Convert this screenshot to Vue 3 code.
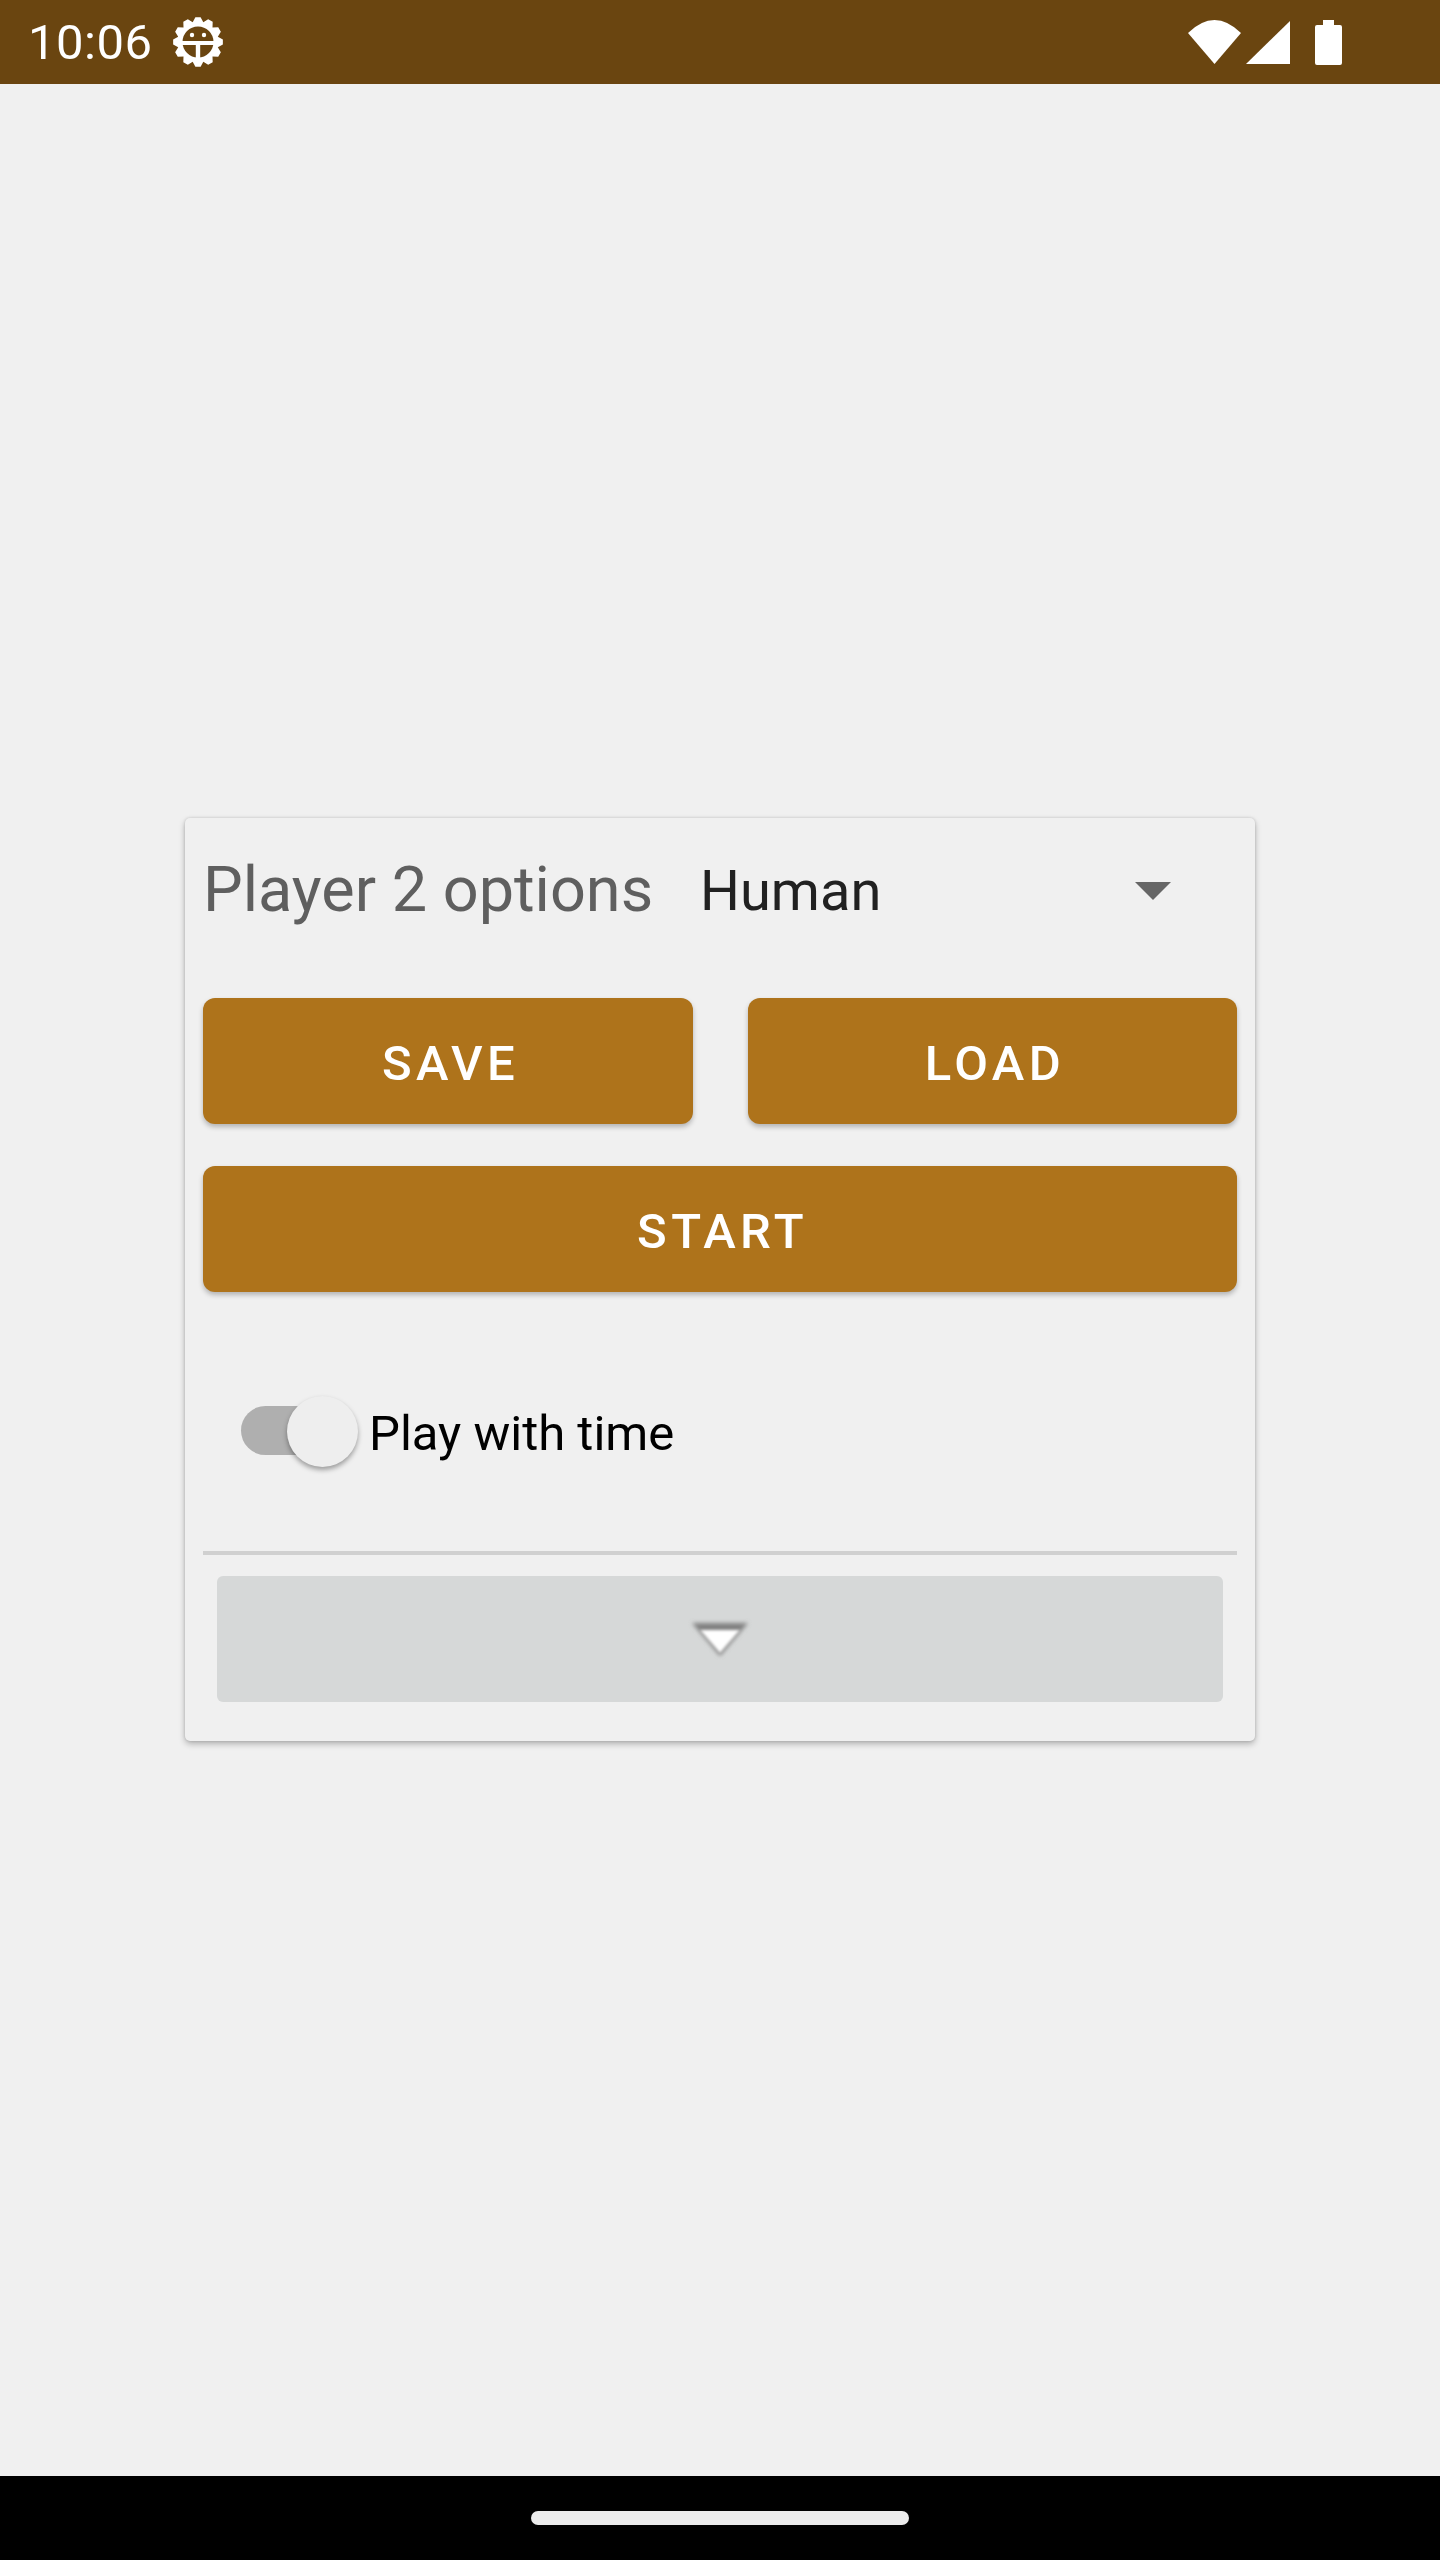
<template>
  <div class="pantalla">
    <div class="status-bar">
      <span class="hora">10:06</span>
      <svg class="icono-debug" viewBox="0 0 50 50">
        <polygon fill="#fff" :points="puntosEngranaje" />
        <circle cx="25" cy="25" r="15.500" fill="#6a4510" />
        <circle cx="19" cy="18" r="2.200" fill="#fff" />
        <circle cx="31" cy="18" r="2.200" fill="#fff" />
        <path d="M8 24h34v4H27.200v14h-4.400V28H8z" fill="#fff" />
      </svg>
      <div class="iconos-estado">
        <svg class="icono-wifi" viewBox="0 0 53 44"><path d="M0 13Q26.500-13 53 13L26.500 44z" fill="#fff" /></svg>
        <svg class="icono-senal" viewBox="0 0 44 43"><path d="M44 0V43H0z" fill="#fff" /></svg>
        <svg class="icono-bateria" viewBox="0 0 27 45"><path d="M8 0h11v5h6a2 2 0 0 1 2 2v36a2 2 0 0 1-2 2H2a2 2 0 0 1-2-2V7a2 2 0 0 1 2-2h6z" fill="#fff" /></svg>
      </div>
    </div>

    <main class="contenido">
      <div class="tarjeta">
        <div class="fila-jugador">
          <span class="titulo">Player 2 options</span>
          <div class="selector">
            <span>Human</span>
            <i class="flecha"></i>
          </div>
        </div>

        <div class="fila-botones">
          <button class="boton">SAVE</button>
          <button class="boton">LOAD</button>
        </div>
        <button class="boton boton-start">START</button>

        <div class="fila-tiempo">
          <div class="switch">
            <div class="switch-pista"></div>
            <div class="switch-bola"></div>
          </div>
          <span class="etiqueta">Play with time</span>
        </div>

        <div class="separador"></div>

        <div class="desplegar">
          <svg class="flecha-desplegar" viewBox="0 0 70 46">
            <defs>
              <filter id="difuso" x="-20%" y="-20%" width="140%" height="140%">
                <feGaussianBlur stdDeviation="2.200" />
              </filter>
              <filter id="difuso-suave" x="-20%" y="-20%" width="140%" height="140%">
                <feGaussianBlur stdDeviation="1.500" />
              </filter>
            </defs>
            <path d="M7 7H63L35 40z" fill="#808080" filter="url(#difuso)" />
            <path d="M15 14H55L35 37z" fill="#fff" filter="url(#difuso-suave)" />
          </svg>
        </div>
      </div>
    </main>

    <div class="nav-bar">
      <div class="pastilla"></div>
    </div>
  </div>
</template>

<script setup>
import { computed } from "vue";

// Dientes del engranaje del icono de depuración
const puntosEngranaje = computed(() => {
  const puntos = [];
  const dientes = 12;
  for (let i = 0; i < dientes; i++) {
    const base = (i / dientes) * Math.PI * 2;
    const paso = (Math.PI * 2) / dientes;
    [[20.5, -0.5], [25, -0.2], [25, 0.2], [20.5, 0.5]].forEach(([r, f]) => {
      const a = base + f * paso;
      puntos.push(`${(25 + r * Math.sin(a)).toFixed(2)},${(25 - r * Math.cos(a)).toFixed(2)}`);
    });
  }
  return puntos.join(" ");
});
</script>

<style>
html, body {
  margin: 0;
  background: #f0f0f0;
}
</style>

<style scoped>
.pantalla {
  width: 1440px;
  height: 2560px;
  display: flex;
  flex-direction: column;
  background: #f0f0f0;
  font-family: Roboto, "Liberation Sans", sans-serif;
  overflow: hidden;
}

.status-bar {
  height: 84px;
  flex: none;
  display: flex;
  align-items: center;
  background: #6a4510;
  color: #fff;
  padding: 0 98px 0 28px;
  box-sizing: border-box;
}

.hora {
  font-size: 49px;
  letter-spacing: 0.5px;
  width: 145px;
}

.icono-debug {
  width: 50px;
  height: 50px;
}

.iconos-estado {
  margin-left: auto;
  display: flex;
  align-items: center;
}

.icono-wifi {
  width: 53px;
  height: 44px;
  margin-right: 5px;
}

.icono-senal {
  width: 44px;
  height: 43px;
  margin-right: 25px;
}

.icono-bateria {
  width: 27px;
  height: 45px;
}

.contenido {
  flex: 1;
  display: flex;
  align-items: center;
  justify-content: center;
  padding-bottom: 1px;
}

.tarjeta {
  width: 1070px;
  height: 923px;
  box-sizing: border-box;
  padding: 0 18px;
  background: #f0f0f0;
  border-radius: 5px;
  box-shadow: 0 3px 6px rgba(0, 0, 0, 0.26), 0 0 3px rgba(0, 0, 0, 0.14);
  display: flex;
  flex-direction: column;
}

.fila-jugador {
  height: 180px;
  flex: none;
  display: flex;
  align-items: center;
  padding-bottom: 38px;
  box-sizing: border-box;
}

.titulo {
  font-size: 63px;
  color: #5f5f5f;
  width: 497px;
}

.selector {
  flex: 1;
  display: flex;
  align-items: center;
  font-size: 56px;
  color: #212121;
  padding-top: 4px;
}

.flecha {
  margin-left: 254px;
  margin-top: -1px;
  width: 0;
  height: 0;
  border-left: 18px solid transparent;
  border-right: 18px solid transparent;
  border-top: 18px solid #666;
}

.fila-botones {
  display: flex;
  justify-content: space-between;
  margin-bottom: 42px;
}

.boton {
  height: 126px;
  width: 490px;
  border: none;
  border-radius: 12px;
  background: #ae731b;
  color: #fff;
  font-family: inherit;
  font-size: 49px;
  font-weight: 500;
  letter-spacing: 4.400px;
  box-shadow: 0 3px 5px rgba(0, 0, 0, 0.25);
  padding: 4px 0 0 5px;
}

.fila-botones .boton + .boton {
  width: 489px;
}

.boton-start {
  width: 100%;
  flex: none;
}

.fila-tiempo {
  height: 259px;
  flex: none;
  display: flex;
  align-items: center;
  padding: 20px 0 0 38px;
  font-size: 49px;
  color: #000;
  box-sizing: border-box;
}

.etiqueta {
  margin-top: 3px;
}

.switch {
  position: relative;
  width: 116px;
  height: 71px;
  flex: none;
  margin-right: 12px;
}

.switch-pista {
  position: absolute;
  left: 0;
  top: 10px;
  width: 104px;
  height: 49px;
  border-radius: 25px;
  background: #afafaf;
}

.switch-bola {
  position: absolute;
  left: 46px;
  top: 0;
  width: 71px;
  height: 71px;
  border-radius: 50%;
  background: #eeeeee;
  box-shadow: 0 3px 5px rgba(0, 0, 0, 0.35);
}

.separador {
  height: 4px;
  flex: none;
  background: #d0d0d0;
}

.desplegar {
  margin: 21px 14px 0;
  height: 126px;
  flex: none;
  border-radius: 6px;
  background: #d6d8d8;
  display: flex;
  align-items: center;
  justify-content: center;
}

.flecha-desplegar {
  width: 70px;
  height: 46px;
}

.nav-bar {
  height: 84px;
  flex: none;
  background: #000;
  display: flex;
  justify-content: center;
  padding-top: 35px;
  box-sizing: border-box;
}

.pastilla {
  width: 378px;
  height: 14px;
  border-radius: 7px;
  background: #ececec;
}
</style>
